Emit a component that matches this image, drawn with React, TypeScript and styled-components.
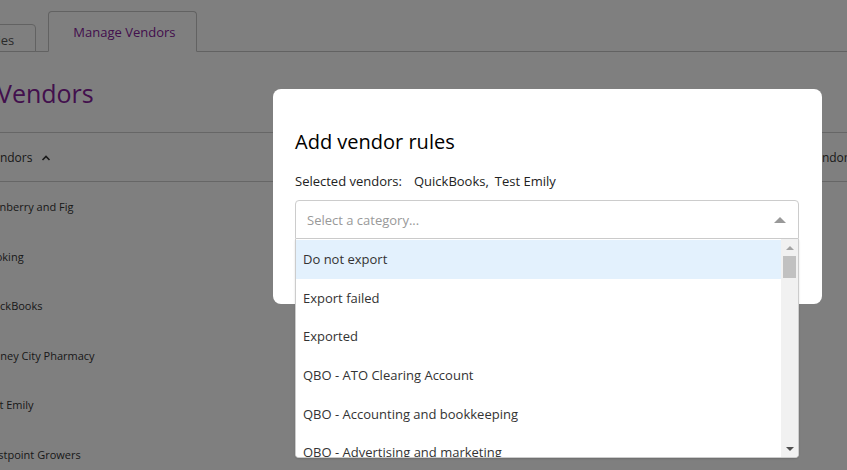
import React from 'react'
import styled, { createGlobalStyle } from 'styled-components';

const GlobalStyle = createGlobalStyle`
    html, body {
        margin: 0;
        padding: 0;
        background: #fff;
        overflow: hidden;
        font-family: "Open Sans", "Liberation Sans", sans-serif;
        color: #333;
    }
`

const vendors = [
    'Cranberry and Fig',
    'Booking',
    'QuickBooks',
    'Sydney City Pharmacy',
    'Test Emily',
    'Westpoint Growers',
];

const categories = [
    'Do not export',
    'Export failed',
    'Exported',
    'QBO - ATO Clearing Account',
    'QBO - Accounting and bookkeeping',
    'QBO - Advertising and marketing',
];

const App: React.FC = () => {
    return (
        <>
            <GlobalStyle />
            <Page>
                <TabBar>
                    <Tab>Categories</Tab>
                    <Tab active>Manage Vendors</Tab>
                </TabBar>
                <Heading>Vendors</Heading>
                <Table>
                    <HeaderRow>
                        <HeaderCell>
                            Vendors
                            <svg width="12" height="12" viewBox="0 0 12 12">
                                <path d="M2.5 8 L6 4.5 L9.5 8" fill="none" stroke="#333" strokeWidth="1.6" />
                            </svg>
                        </HeaderCell>
                        <HeaderCell>Vendor rules</HeaderCell>
                    </HeaderRow>
                    {vendors.map((v) => (
                        <Row key={v}>
                            <Cell>{v}</Cell>
                            <Cell />
                        </Row>
                    ))}
                </Table>
            </Page>

            <Overlay>
                <Modal>
                    <ModalTitle>Add vendor rules</ModalTitle>
                    <Selected>
                        Selected vendors:
                        <VendorName>QuickBooks,</VendorName>
                        <VendorName>Test Emily</VendorName>
                    </Selected>
                    <SelectWrap>
                        <SelectControl>
                            <Placeholder>Select a category...</Placeholder>
                            <Caret />
                        </SelectControl>
                        <Menu>
                            <MenuList>
                                {categories.map((c, i) => (
                                    <MenuItem key={c} focused={i === 0}>{c}</MenuItem>
                                ))}
                            </MenuList>
                            <ScrollBar>
                                <ScrollArrow up />
                                <ScrollThumb />
                                <ScrollSpace />
                                <ScrollArrow />
                            </ScrollBar>
                        </Menu>
                    </SelectWrap>
                </Modal>
            </Overlay>
        </>
    )
}

const Page = styled.div`
    margin-left: -100px;
    width: calc(100vw + 100px);
    height: 100vh;
`
const TabBar = styled.div`
    display: flex;
    align-items: flex-end;
    gap: 12px;
    height: 51px;
    padding-left: 25px;
    border-bottom: 1px solid #c4c4c4;
`
const Tab = styled.div<{ active?: boolean }>`
    height: ${p => p.active ? '41px' : '28px'};
    padding: 0 24px;
    display: flex;
    align-items: center;
    justify-content: center;
    box-sizing: border-box;
    border: 1px solid #c4c4c4;
    border-bottom: ${p => p.active ? '1px solid #fff' : '1px solid #c4c4c4'};
    margin-bottom: -1px;
    border-radius: 4px 4px 0 0;
    background: #fff;
    font-size: 13px;
    color: ${p => p.active ? '#85209a' : '#555'};
    padding-top: ${p => p.active ? '0' : '3px'};
    &:first-child {
        padding-right: 21px;
    }
    &:last-child {
        padding-right: 21px;
    }
`
const Heading = styled.h1`
    margin: 24px 0 22px;
    padding-left: 97px;
    font-size: 25px;
    line-height: 34px;
    font-weight: 400;
    color: #85209a;
`
const Table = styled.div`
    display: flex;
    flex-direction: column;
`
const HeaderRow = styled.div`
    display: grid;
    grid-template-columns: 1fr 39px;
    height: 48px;
    border-top: 1px solid #ccc;
    border-bottom: 1px solid #ccc;
    align-items: center;
`
const HeaderCell = styled.div`
    display: flex;
    align-items: center;
    gap: 8px;
    padding-left: 86px;
    font-size: 12px;
    color: #333;
    white-space: nowrap;
    &:last-child {
        padding-left: 0;
    }
    svg {
        margin-top: 1px;
    }
`
const Row = styled.div`
    display: grid;
    grid-template-columns: 1fr 39px;
    height: 49.5px;
    align-items: center;
`
const Cell = styled.div`
    padding-left: 82px;
    font-size: 11px;
    color: #333;
`
const Overlay = styled.div`
    position: fixed;
    inset: 0;
    background: rgba(0, 0, 0, 0.5);
    padding: 89px 0 0 273px;
`
const Modal = styled.div`
    width: 549px;
    height: 215px;
    box-sizing: border-box;
    padding: 39px 23px 0 22px;
    background: #fff;
    border-radius: 8px;
`
const ModalTitle = styled.h2`
    margin: 0;
    font-size: 20px;
    line-height: 28px;
    font-weight: 500;
    color: #000;
`
const Selected = styled.div`
    margin-top: 16px;
    font-size: 13px;
    line-height: 18px;
    color: #222;
    display: flex;
`
const VendorName = styled.span`
    margin-left: 6px;
    &:first-child {
        margin-left: 12px;
    }
    & + & {
        margin-left: 6px;
    }
`
const SelectWrap = styled.div`
    position: relative;
    margin-top: 10px;
`
const SelectControl = styled.div`
    height: 39px;
    box-sizing: border-box;
    border: 1px solid #ccc;
    border-radius: 4px 4px 0 0;
    display: flex;
    align-items: center;
    justify-content: space-between;
    padding: 0 12px 0 11px;
`
const Placeholder = styled.span`
    font-size: 13px;
    color: #999;
`
const Caret = styled.span`
    width: 0;
    height: 0;
    border-left: 6px solid transparent;
    border-right: 6px solid transparent;
    border-bottom: 6px solid #999;
`
const Menu = styled.div`
    position: absolute;
    top: 100%;
    left: 0;
    right: 0;
    height: 219px;
    box-sizing: border-box;
    background: #fff;
    border: 1px solid #ccc;
    border-top: none;
    border-radius: 0 0 4px 4px;
    display: flex;
    overflow: hidden;
    box-shadow: 0 1px 2px rgba(0, 0, 0, 0.15);
`
const MenuList = styled.div`
    flex: 1;
    display: flex;
    flex-direction: column;
    padding-top: 1px;
`
const MenuItem = styled.div<{ focused?: boolean }>`
    height: 38.6px;
    flex-shrink: 0;
    box-sizing: border-box;
    display: flex;
    align-items: center;
    padding-left: 7px;
    font-size: 13px;
    color: #333;
    background: ${p => p.focused ? '#e3f1fd' : '#fff'};
`
const ScrollBar = styled.div`
    width: 17px;
    background: #f1f1f1;
    display: flex;
    flex-direction: column;
    align-items: center;
`
const ScrollArrow = styled.div<{ up?: boolean }>`
    height: 17px;
    width: 17px;
    display: flex;
    align-items: center;
    justify-content: center;
    &::after {
        content: '';
        width: 0;
        height: 0;
        border-left: 4px solid transparent;
        border-right: 4px solid transparent;
        ${p => p.up ? 'border-bottom: 4px solid #a3a3a3;' : 'border-top: 4px solid #505050;'}
    }
`
const ScrollThumb = styled.div`
    width: 13px;
    height: 22px;
    background: #c1c1c1;
`
const ScrollSpace = styled.div`
    flex: 1;
`

export default App;
